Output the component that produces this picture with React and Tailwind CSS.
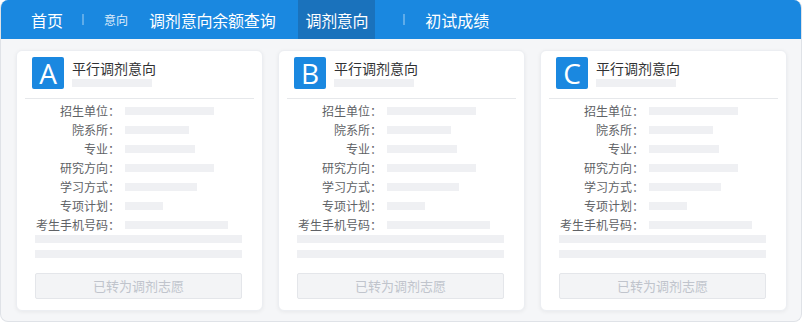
const FONT = { fontFamily: '"Noto Sans CJK SC", "Noto Sans", sans-serif' };

const rows = [
  { label: '招生单位：', w: 'w-[89px]' },
  { label: '院系所：', w: 'w-[64px]' },
  { label: '专业：', w: 'w-[70px]' },
  { label: '研究方向：', w: 'w-[89px]' },
  { label: '学习方式：', w: 'w-[72px]' },
  { label: '专项计划：', w: 'w-[38px]' },
  { label: '考生手机号码：', w: 'w-[103px]' },
];

function Sep({ className }) {
  return <div className={`w-[2px] h-[11px] bg-white/30 ${className}`} />;
}

function IntentCard({ letter }) {
  return (
    <div className="w-[247px] h-[261px] bg-white rounded-[6px] border border-[#eceef2] shadow-[0_1px_4px_rgba(0,0,0,0.06)] flex flex-col">
      <div className="flex pl-[15px] pt-[6px]">
        <div className="w-[32px] h-[32px] bg-[#1a88e0] rounded-[2px] flex items-center justify-center text-white text-[28px] leading-none" style={{ fontFamily: '"Open Sans", sans-serif' }}>
          {letter}
        </div>
        <div className="ml-[8px] flex flex-col">
          <div className="text-[14px] leading-[20px] mt-[1px] text-[#303133]">平行调剂意向</div>
          <div className="w-[80px] h-[8px] mt-[1px] bg-[#eff0f3]" />
        </div>
      </div>
      <div className="mx-[8px] mt-[9px] h-px bg-[#e6e8eb]" />
      <div className="flex flex-col pt-[2px]">
        {rows.map((r) => (
          <div key={r.label} className="flex items-center h-[19px]">
            <div className="w-[103px] text-right text-[12px] text-[#606266] leading-none">{r.label}</div>
            <div className={`ml-[5px] h-[8px] bg-[#eff0f3] ${r.w}`} />
          </div>
        ))}
      </div>
      <div className="ml-[18px] mr-[20px] mt-[1px] h-[8px] bg-[#eff0f3]" />
      <div className="ml-[18px] mr-[20px] mt-[7px] h-[8px] bg-[#eff0f3]" />
      <div className="ml-[18px] mr-[20px] mt-[15px] h-[26px] bg-[#f3f4f6] border border-[#e4e6ea] rounded-[2px] flex items-center justify-center text-[13px] text-[#c0c4cc]">
        已转为调剂志愿
      </div>
    </div>
  );
}

export default function App() {
  return (
    <div className="w-[802px] h-[322px] bg-white" style={FONT}>
      <div className="w-full h-full rounded-[8px] border-x border-b border-[#dfe2e7] overflow-hidden bg-[#f5f6f8] flex flex-col">
        <div className="h-[39px] bg-[#1a88e0] flex items-center text-white shrink-0">
          <span className="ml-[30px] text-[16px]">首页</span>
          <Sep className="ml-[19px]" />
          <span className="ml-[20px] text-[12px] text-white/85">意向</span>
          <span className="ml-[21px] text-[16px] tracking-[-0.2px]">调剂意向余额查询</span>
          <span className="ml-[23px] h-full px-[7px] bg-[#1a72bc] flex items-center text-[16px] tracking-[-0.3px]">调剂意向</span>
          <Sep className="ml-[28px]" />
          <span className="ml-[20px] text-[16px]">初试成绩</span>
        </div>
        <div className="flex gap-[15px] pl-[15px] pt-[11px]">
          <IntentCard letter="A" />
          <IntentCard letter="B" />
          <IntentCard letter="C" />
        </div>
      </div>
    </div>
  );
}
